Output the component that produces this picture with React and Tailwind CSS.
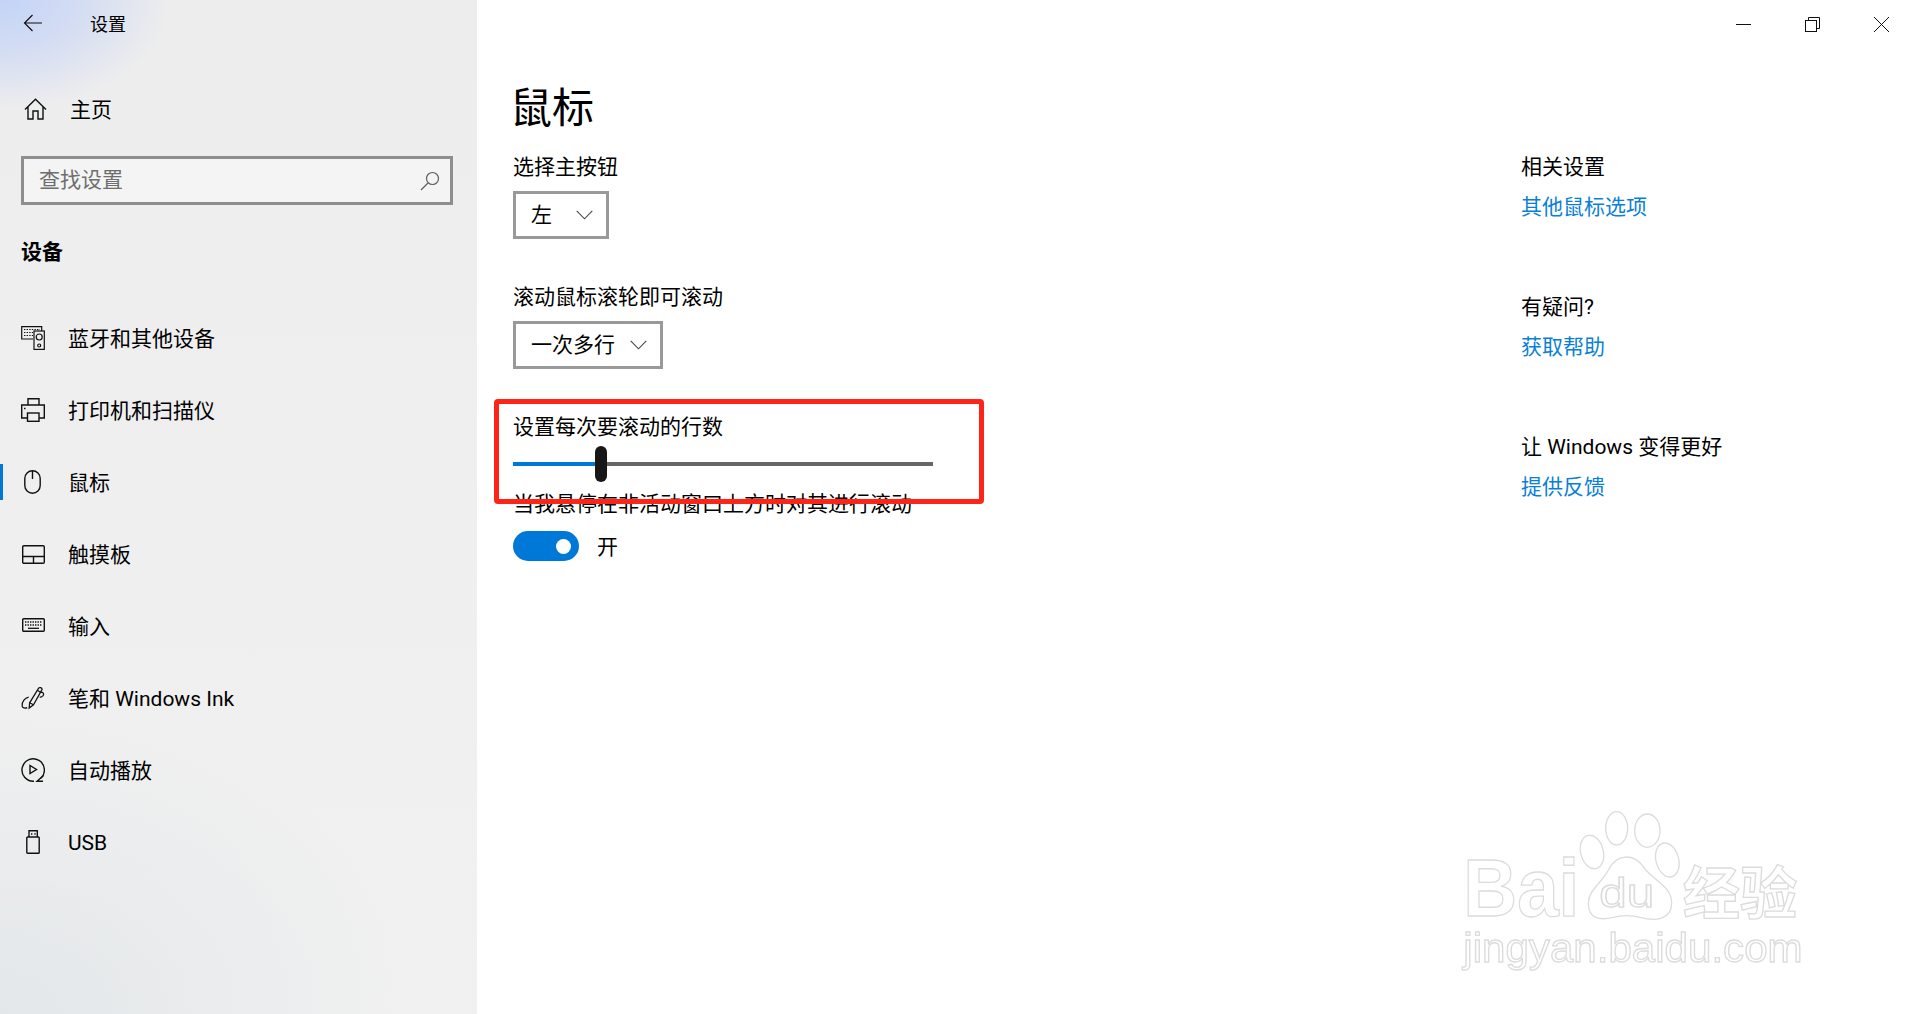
import React from 'react';

const ic = { fill: 'none', stroke: '#111', strokeWidth: 1.4 };

const BackIcon = () => (
  <svg width="20" height="18" viewBox="0 0 20 18" {...ic} strokeWidth="1.2">
    <path d="M19 9H1.5M9.5 1 1.5 9l8 8" />
  </svg>
);

const HomeIcon = () => (
  <svg width="23" height="22" viewBox="0 0 23 22" {...ic}>
    <path d="M1 11.5 11.5 1.2 22 11.5M4 9v12h5v-8h5v8h5V9" />
  </svg>
);

const SearchIcon = () => (
  <svg width="20" height="20" viewBox="0 0 20 20" fill="none" stroke="#5f5f5f" strokeWidth="1.2">
    <circle cx="12.5" cy="7.5" r="6" />
    <path d="M8 12 1 19" />
  </svg>
);

const DevicesIcon = () => (
  <svg width="24" height="24" viewBox="0 0 24 24" {...ic} strokeWidth="1.2">
    <path d="M12 13H.7V.7h20V5" />
    <rect x="13" y="5" width="10.3" height="18.4" />
    <circle cx="18.2" cy="11" r="3" />
    <circle cx="18.2" cy="19.5" r="1.5" />
    <path d="M3 3.5h16M3 6.5h9M3 9.5h9" strokeDasharray="1.4 1.2" />
  </svg>
);

const PrinterIcon = () => (
  <svg width="24" height="24" viewBox="0 0 24 24" {...ic}>
    <path d="M7 7V.7h11V7M6.5 20H.7V7h22.6v13H18" />
    <rect x="6.5" y="15" width="11.5" height="8.3" />
    <path d="M3 10.5h1.5" />
  </svg>
);

const MouseIcon = () => (
  <svg className="-ml-[1px]" width="17" height="24" viewBox="0 0 17 24" {...ic}>
    <rect x=".8" y=".8" width="15.4" height="22.4" rx="7.7" />
    <path d="M8.5 1v8" />
  </svg>
);

const TouchpadIcon = () => (
  <svg width="23" height="19" viewBox="0 0 23 19" {...ic}>
    <rect x=".7" y=".7" width="21.6" height="17.6" rx="1.2" />
    <path d="M1 11.5h21M11.5 11.5v7" />
  </svg>
);

const KeyboardIcon = () => (
  <svg className="-mt-[2px]" width="23" height="14" viewBox="0 0 23 14" {...ic}>
    <rect x=".7" y=".7" width="21.6" height="12.6" rx="1" />
    <path d="M3 4h17M3 7h17" strokeDasharray="1.4 1.1" strokeWidth="1.5" />
    <path d="M6 10.3h11" strokeWidth="1.3" />
  </svg>
);

const PenIcon = () => (
  <svg width="25" height="24" viewBox="0 0 25 24" {...ic} strokeWidth="1.3">
    <path d="M8.5 22.5 9 17 18.5 1.5c1-.9 3.200-.2 3.500 1.500L13 19Z" />
    <path d="m17 4 4 2.500M9 17l4 2M8 11C4 12 .5 16 1.200 20.500c.4 2 3 2.500 5.300 1.500M20.500 6c2.500 0 4 1.500 2.500 3.500-.8 1-2 1.500-3.500 1.800" />
  </svg>
);

const AutoplayIcon = () => (
  <svg width="24" height="24" viewBox="0 0 24 24" {...ic}>
    <path d="M19.500 20.500A11.200 11.200 0 1 0 13 23.200" />
    <path d="M9 7.500v8l6.500-4ZM22.500 17.500 16 23.300h6" />
  </svg>
);

const UsbIcon = () => (
  <svg className="-ml-[1px]" width="14" height="24" viewBox="0 0 14 24" {...ic}>
    <path d="M3 7V.7h8.300V7" />
    <rect x=".8" y="7" width="12.400" height="16.300" rx=".8" />
    <path d="M5 4h1.400M8.300 4h1.400" />
  </svg>
);

const Chevron = () => (
  <svg width="17" height="10" viewBox="0 0 17 10" fill="none" stroke="#444" strokeWidth="1.1">
    <path d="M.7.8 8.500 8.800 16.300.8" />
  </svg>
);

const navItems = [
  { label: '蓝牙和其他设备', Icon: DevicesIcon },
  { label: '打印机和扫描仪', Icon: PrinterIcon },
  { label: '鼠标', Icon: MouseIcon, active: true },
  { label: '触摸板', Icon: TouchpadIcon },
  { label: '输入', Icon: KeyboardIcon },
  { label: '笔和 Windows Ink', Icon: PenIcon },
  { label: '自动播放', Icon: AutoplayIcon },
  { label: 'USB', Icon: UsbIcon },
];

const related = [
  { title: '相关设置', link: '其他鼠标选项' },
  { title: '有疑问?', link: '获取帮助' },
  { title: '让 Windows 变得更好', link: '提供反馈' },
];

const Select = ({ value, className }) => (
  <div className={`mt-[10px] flex h-[48px] items-center justify-between border-[3px] border-[#999999] pl-[15px] pr-[13px] ${className}`}>
    <span className="leading-[28px]">{value}</span>
    <Chevron />
  </div>
);

const Watermark = () => (
  <svg
    className="absolute left-[1440px] top-[780px] blur-[0.4px]"
    width="380"
    height="200"
    viewBox="0 0 1140 600"
    fill="#fff"
    stroke="#dcdcdc"
    strokeWidth="4"
  >
    <text x="70" y="408" fontSize="246" fontWeight="700" textLength="348" lengthAdjust="spacingAndGlyphs" fontFamily="Liberation Sans">Bai</text>
    <ellipse cx="530" cy="145" rx="33" ry="50" />
    <ellipse cx="622" cy="152" rx="38" ry="50" />
    <ellipse cx="456" cy="216" rx="34" ry="51" transform="rotate(-15 456 216)" />
    <ellipse cx="682" cy="240" rx="34" ry="52" transform="rotate(-15 682 240)" />
    <path d="M445 370c0-40 40-60 60-100 25-50 75-50 105-10 20 35 85 55 85 110 0 50-50 55-95 42-30-8-50-8-80 0-40 10-75 5-75-42Z" />
    <text x="478" y="382" fontSize="120" fontWeight="400" textLength="165" lengthAdjust="spacingAndGlyphs" fontFamily="Liberation Sans">du</text>
    <text x="728" y="402" fontSize="172" fontWeight="700" textLength="344" lengthAdjust="spacingAndGlyphs" fontFamily="Noto Sans CJK SC">经验</text>
    <text x="70" y="545" fontSize="124" textLength="1018" lengthAdjust="spacingAndGlyphs" fontFamily="Liberation Sans">jingyan.baidu.com</text>
  </svg>
);

export default function App() {
  return (
    <div className="relative flex h-[1014px] w-[1907px] overflow-hidden bg-white font-['Roboto','Noto_Sans_CJK_SC',sans-serif] text-[21px] text-black">
      {/* Sidebar */}
      <aside className="flex w-[477px] shrink-0 flex-col bg-[radial-gradient(ellipse_170px_110px_at_0px_0px,#c3d4f7_0%,#d3dcf3_45%,transparent_100%),radial-gradient(ellipse_420px_300px_at_0px_100%,#e3e7e9_0%,transparent_100%),linear-gradient(#ededee,#f1f1f1)]">
        <div className="flex h-[46px] items-center pl-[23px]">
          <BackIcon />
          <span className="ml-[47px] mt-[4px] text-[18px] leading-[28px]">设置</span>
        </div>

        <div className="mt-[27px] flex h-[72px] items-center pl-[24px]">
          <HomeIcon />
          <span className="ml-[23px] mt-[2px] leading-[28px]">主页</span>
        </div>

        <div className="ml-[21px] mr-[24px] mt-[11px] flex h-[49px] items-center justify-between border-[3px] border-[#8e8e8e] bg-[#f4f4f4] pl-[15px] pr-[10px]">
          <span className="-mt-[2px] leading-[28px] text-[#6e6e6e]">查找设置</span>
          <SearchIcon />
        </div>

        <h2 className="ml-[21px] mt-[33px] font-bold leading-[28px]">设备</h2>

        <nav className="mt-[36px] flex flex-col">
          {navItems.map(({ label, Icon, active }) => (
            <div key={label} className="flex h-[72px] items-center">
              <div className={active ? 'h-[36px] w-[3px] bg-[#0078d7]' : 'h-[36px] w-[3px]'} />
              <div className="ml-[18px] flex w-[24px] justify-center">
                <Icon />
              </div>
              <span className="ml-[23px] mt-[2px] leading-[28px]">{label}</span>
            </div>
          ))}
        </nav>
      </aside>

      {/* Content */}
      <div className="flex min-w-0 flex-1 flex-col">
        <div className="flex h-[48px] items-center justify-end gap-[54px] pr-[18px]">
          <svg width="15" height="15" viewBox="0 0 15 15" stroke="#111" fill="none">
            <path d="M0 7.500h15" />
          </svg>
          <svg width="15" height="15" viewBox="0 0 15 15" stroke="#111" fill="none">
            <rect x=".5" y="3.500" width="11" height="11" />
            <path d="M3.500 3.500V.5h11v11h-3" />
          </svg>
          <svg width="15" height="15" viewBox="0 0 15 15" stroke="#111" fill="none">
            <path d="m0 0 15 15M15 0 0 15" />
          </svg>
        </div>

        <div className="flex flex-1">
          <main className="flex-1 pl-[36px]">
            <h1 className="-ml-[3px] mt-[33px] text-[42px] font-normal leading-[56px]">鼠标</h1>

            <p className="mt-[16px] leading-[28px]">选择主按钮</p>
            <Select value="左" className="w-[96px]" />

            <p className="mt-[44px] leading-[28px]">滚动鼠标滚轮即可滚动</p>
            <Select value="一次多行" className="w-[150px]" />

            <p className="mt-[44px] leading-[28px]">设置每次要滚动的行数</p>
            <div className="mt-[5px] flex h-[36px] w-[420px] items-center">
              <div className="h-[4px] w-[82px] bg-[#0078d7]" />
              <div className="h-[36px] w-[12px] rounded-full bg-[#171717]" />
              <div className="h-[4px] flex-1 bg-[#666666]" />
            </div>

            <p className="mt-[8px] leading-[28px]">当我悬停在非活动窗口上方时对其进行滚动</p>
            <div className="mt-[13px] flex items-center gap-[18px]">
              <div className="flex h-[30px] w-[66px] items-center justify-end rounded-full bg-[#0078d7] pr-[8px]">
                <div className="h-[15px] w-[15px] rounded-full bg-white" />
              </div>
              <span className="mt-[2px] leading-[28px]">开</span>
            </div>
          </main>

          <aside className="w-[386px] shrink-0 pt-[105px]">
            {related.map(({ title, link }) => (
              <div key={title} className="mb-[72px]">
                <p className="leading-[28px]">{title}</p>
                <a className="mt-[12px] block leading-[28px] text-[#0a7fd8]">{link}</a>
              </div>
            ))}
          </aside>
        </div>
      </div>

      {/* Annotation drawn over the screenshot */}
      <div className="absolute left-[494px] top-[399px] h-[105px] w-[490px] rounded-[4px] border-[5px] border-[#ff2418]" />

      <Watermark />
    </div>
  );
}
